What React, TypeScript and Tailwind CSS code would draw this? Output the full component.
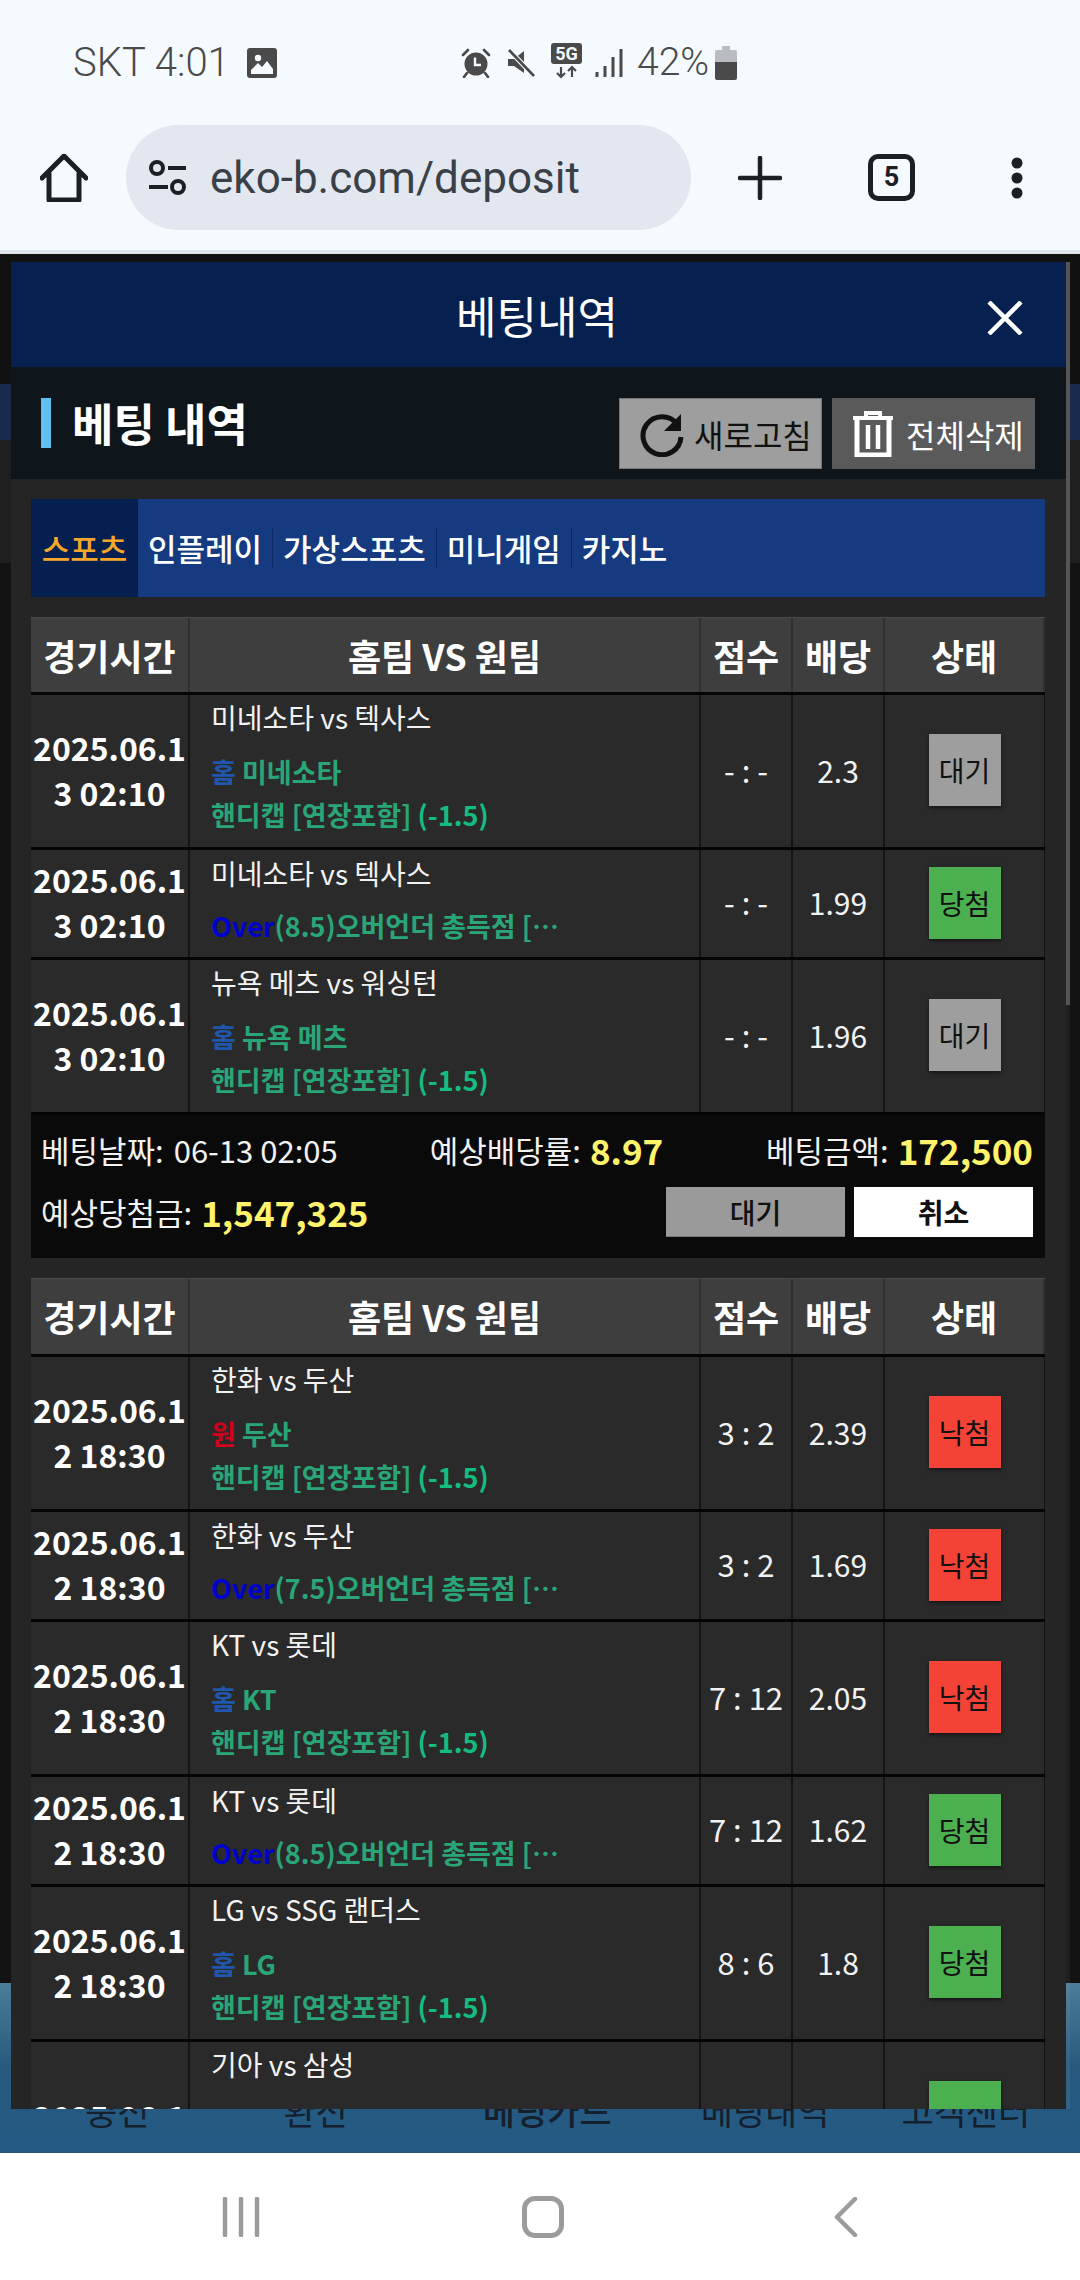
import React from "react";

const KR = "[font-family:'Noto_Sans_CJK_KR','Noto_Sans',sans-serif]";

type Row = {
  date: string;
  match: string;
  kind: "home" | "away" | "over" | "cut";
  pick?: string;
  score?: string;
  odds?: string;
  status?: "대기" | "당첨" | "낙첨";
  box?: string;
};

const statusClass: Record<string, string> = {
  대기: "bg-[#9e9e9e]",
  당첨: "bg-[#4caf50]",
  낙첨: "bg-[#f44336]",
};

function Handicap() {
  return (
    <div className="h-[43px] leading-[43px] text-[27px] text-[#2aa578] font-bold">
      핸디캡 [연장포함] <span className="text-[#13bd80]">(-1.5)</span>
    </div>
  );
}

function Head({ tall }: { tall?: boolean }) {
  const th = "flex items-center justify-center border-r-2 border-[#303030] text-[36px] font-bold text-white pb-px";
  return (
    <div className={`flex bg-[#3e3e3e] border-t border-[#4a4a4a] ${tall ? "h-[76px]" : "h-[75px]"}`}>
      <div className={`${th} w-[159px]`}>경기시간</div>
      <div className={`${th} w-[511px]`}>홈팀 VS 원팀</div>
      <div className={`${th} w-[92px]`}>점수</div>
      <div className={`${th} w-[92px]`}>배당</div>
      <div className={`${th} w-[160px] border-r-0`}>상태</div>
    </div>
  );
}

function Line({ r }: { r: Row }) {
  const cell = "flex items-center justify-center border-r-2 border-[#141414]";
  const tall = r.kind !== "over";
  return (
    <div className={`flex bg-[#2a2a2a] border-r border-[#141414] w-[1014px] ${tall ? "h-[152px]" : "h-[107px]"}`}>
      <div className={`${cell} w-[159px]`}>
        <div className="w-full break-all text-center text-[32px] leading-[45px] font-bold text-white -mt-[3px]">{r.date}</div>
      </div>
      <div className={`w-[511px] border-r-2 border-[#141414] pl-[21px] text-[28px] ${tall ? "pt-0" : "pt-px"}`}>
        <div className={`h-[44px] leading-[44px] text-[#f2f2f2] ${tall ? "mb-[11px]" : "mb-[9px]"}`}>{r.match}</div>
        {r.kind === "over" && (
          <div className="w-[372px] truncate h-[43px] leading-[43px] text-[27px] text-[#2aa578] font-bold">
            <span className="text-[#0000cd]">Over</span>
            {r.pick}오버언더 총득점 [연장포함]
          </div>
        )}
        {(r.kind === "home" || r.kind === "away") && (
          <>
            <div className="h-[43px] leading-[43px] text-[27px] font-bold text-[#2aa578]">
              <span className={r.kind === "home" ? "text-[#1f57ad]" : "text-[#d0021b]"}>
                {r.kind === "home" ? "홈" : "원"}
              </span>{" "}
              {r.pick}
            </div>
            <Handicap />
          </>
        )}
      </div>
      <div className={`${cell} w-[92px] text-[31px] text-[#f2f2f2] whitespace-pre pb-[2px]`}>{r.score}</div>
      <div className={`${cell} w-[92px] text-[30px] text-[#f2f2f2] pb-[2px]`}>{r.odds}</div>
      <div className="flex items-center justify-center w-[159px] pb-[2px]">
        <div
          className={`flex items-center justify-center w-[72px] h-[72px] text-[28px] text-[#111] shadow-[0_2px_4px_rgba(0,0,0,0.5)] ${r.box ?? statusClass[r.status ?? "대기"]}`}
        >
          {r.status}
        </div>
      </div>
    </div>
  );
}

const first: Row[] = [
  { date: "2025.06.13 02:10", match: "미네소타 vs 텍사스", kind: "home", pick: "미네소타", score: "- : -", odds: "2.3", status: "대기" },
  { date: "2025.06.13 02:10", match: "미네소타 vs 텍사스", kind: "over", pick: "(8.5)", score: "- : -", odds: "1.99", status: "당첨" },
  { date: "2025.06.13 02:10", match: "뉴욕 메츠 vs 워싱턴", kind: "home", pick: "뉴욕 메츠", score: "- : -", odds: "1.96", status: "대기" },
];

const second: Row[] = [
  { date: "2025.06.12 18:30", match: "한화 vs 두산", kind: "away", pick: "두산", score: "3 : 2", odds: "2.39", status: "낙첨" },
  { date: "2025.06.12 18:30", match: "한화 vs 두산", kind: "over", pick: "(7.5)", score: "3 : 2", odds: "1.69", status: "낙첨" },
  { date: "2025.06.12 18:30", match: "KT vs 롯데", kind: "home", pick: "KT", score: "7 : 12", odds: "2.05", status: "낙첨" },
  { date: "2025.06.12 18:30", match: "KT vs 롯데", kind: "over", pick: "(8.5)", score: "7 : 12", odds: "1.62", status: "당첨" },
  { date: "2025.06.12 18:30", match: "LG vs SSG 랜더스", kind: "home", pick: "LG", score: "8 : 6", odds: "1.8", status: "당첨" },
  { date: "2025.06.1", match: "기아 vs 삼성", kind: "cut", box: "bg-[#4caf50]" },
];

function Summary() {
  const num = "text-[35px] font-bold text-[#fff36b] ml-[9px]";
  return (
    <div className="bg-[#0a0a0a] h-[143px] pl-[10px] pr-[12px] text-[31px] text-[#f2f2f2]">
      <div className="flex items-center h-[68px] pt-[2px]">
        <span>베팅날짜:</span>
        <span className="ml-[10px]">06-13 02:05</span>
        <span className="ml-[92px]">예상배당률:</span>
        <span className={num}>8.97</span>
        <span className="ml-auto">베팅금액:</span>
        <span className={num}>172,500</span>
      </div>
      <div className="flex items-center h-[50px] mt-[4px]">
        <span>예상당첨금:</span>
        <span className={num}>1,547,325</span>
        <button className="ml-auto w-[179px] h-[50px] bg-[#9a9a9a] border-b border-[#777] text-[28px] font-medium text-[#111]">대기</button>
        <button className="ml-[9px] w-[179px] h-[50px] bg-white text-[28px] font-bold text-[#111]">취소</button>
      </div>
    </div>
  );
}

function StatusIcons() {
  return (
    <>
      <svg className="w-[30px] h-[30px] ml-[184px]" viewBox="0 0 30 30">
        <circle cx="15" cy="16" r="11.5" fill="#4a4a4a" />
        <path d="M14 9.5v7.5h6" stroke="#f5faff" strokeWidth="2.4" fill="none" />
        <path d="M2 7l5-5M28 7l-5-5M6 25l-3 4M24 25l3 4" stroke="#4a4a4a" strokeWidth="2.6" fill="none" strokeLinecap="round" />
      </svg>
      <svg className="w-[30px] h-[30px] ml-[15px]" viewBox="0 0 30 30">
        <path d="M2 11h6l10-8v22l-10-7H2z" fill="#4a4a4a" />
        <path d="M3 2l25 26" stroke="#f5faff" strokeWidth="5" />
        <path d="M3 2l25 26" stroke="#4a4a4a" strokeWidth="2.6" />
      </svg>
      <svg className="w-[31px] h-[36px] ml-[15px] -mt-[3px]" viewBox="0 0 31 36">
        <rect x="0" y="0" width="31" height="21" rx="3" fill="#4a4a4a" />
        <text x="15.5" y="17" textAnchor="middle" fontSize="18" fontWeight="700" fill="#f5faff" fontFamily="Roboto, sans-serif">5G</text>
        <path d="M10 24v10M6 30l4 4 4-4M21 34V24M17 28l4-4 4 4" stroke="#4a4a4a" strokeWidth="2.2" fill="none" />
      </svg>
      <svg className="w-[28px] h-[30px] ml-[13px]" viewBox="0 0 28 30">
        <path d="M2 24v5M10 18v11M18 9v20M26 1v28" stroke="#4a4a4a" strokeWidth="3" fill="none" />
      </svg>
    </>
  );
}

export default function App() {
  return (
    <div className={`relative w-[1080px] h-[2280px] overflow-hidden flex flex-col ${KR}`}>
      {/* browser chrome */}
      <div className="bg-[#f5faff] h-[254px] border-b-4 border-[#dfe4ea]">
        <div className="flex items-center h-[125px] pl-[73px] text-[40px] text-[#4a4a4a] font-['Roboto',sans-serif] font-light">
          <span className="w-[152px] whitespace-nowrap">SKT 4:01</span>
          <svg className="w-[30px] h-[30px] ml-[22px]" viewBox="0 0 30 30">
            <rect width="30" height="30" rx="3" fill="#4a4a4a" />
            <circle cx="11" cy="10" r="3.2" fill="#f5faff" />
            <path d="M4 26v-4l7-7 4 4 5-6 6 8v5z" fill="#f5faff" />
          </svg>
          <StatusIcons />
          <span className="ml-[14px] w-[73px] text-[39px] whitespace-nowrap">42%</span>
          <svg className="w-[22px] h-[34px] ml-[5px]" viewBox="0 0 22 34">
            <path d="M7 0h8v4h5a2 2 0 012 2v10H0V6a2 2 0 012-2h5z" fill="#b9bcc0" />
            <path d="M0 16h22v16a2 2 0 01-2 2H2a2 2 0 01-2-2z" fill="#4a4a4a" />
          </svg>
        </div>
        <div className="flex items-center h-[105px]">
          <svg className="w-[48px] h-[48px] ml-[40px]" viewBox="0 0 48 48">
            <path d="M2 24L24 2l22 22M9 19v27h30V19" fill="none" stroke="#1c2024" strokeWidth="5" strokeLinejoin="round" strokeLinecap="round" />
          </svg>
          <div className="flex items-center ml-[38px] w-[565px] h-[105px] rounded-full bg-[#e2e7f0] pl-[22px]">
            <svg className="w-[40px] h-[38px]" viewBox="0 0 40 38">
              <circle cx="9" cy="9" r="6" fill="none" stroke="#1c2024" strokeWidth="4" />
              <path d="M20 9h18M1 28h19" stroke="#1c2024" strokeWidth="4" />
              <circle cx="30" cy="28" r="6" fill="none" stroke="#1c2024" strokeWidth="4" />
            </svg>
            <span className="ml-[22px] text-[44px] text-[#3a4048] font-['Roboto',sans-serif]">eko-b.com/deposit</span>
          </div>
          <svg className="w-[44px] h-[44px] ml-[47px]" viewBox="0 0 44 44">
            <path d="M22 2v40M2 22h40" stroke="#1c2024" strokeWidth="4.5" strokeLinecap="round" />
          </svg>
          <div className="flex items-center justify-center w-[47px] h-[47px] ml-[86px] rounded-[10px] border-[5px] border-[#1c2024] text-[27px] font-bold text-[#1c2024] font-['Roboto',sans-serif]">
            5
          </div>
          <svg className="w-[12px] h-[42px] ml-[96px]" viewBox="0 0 12 42">
            <circle cx="6" cy="6" r="5.5" fill="#1c2024" />
            <circle cx="6" cy="21" r="5.5" fill="#1c2024" />
            <circle cx="6" cy="36" r="5.5" fill="#1c2024" />
          </svg>
        </div>
      </div>

      {/* page behind the dialog */}
      <div className="h-[130px] bg-[#111111]" />
      <div className="h-[56px] bg-[#1a2a4f]" />
      <div className="h-[123px] bg-[#1f1f1f]" />
      <div className="h-[1420px] bg-[#131313]" />
      <div className="h-[170px] bg-gradient-to-b from-[#4b7d98] via-[#27597d] to-[#245a85] flex items-end pb-[19px] text-[35px] leading-[48px] text-[#14202c]">
        <span className="ml-[85px]">충전</span>
        <span className="ml-[134px]">환전</span>
        <span className="ml-[135px] font-medium">베팅카드</span>
        <span className="ml-[89px]">베팅내역</span>
        <span className="ml-[72px]">고객센터</span>
      </div>

      {/* gesture bar */}
      <div className="flex-1 bg-white flex items-center">
        <svg className="w-[38px] h-[40px] ml-[222px]" viewBox="0 0 38 40">
          <path d="M3 2v36M19 2v36M35 2v36" stroke="#9b9b9b" strokeWidth="4.5" strokeLinecap="round" />
        </svg>
        <div className="w-[42px] h-[42px] ml-[262px] rounded-[13px] border-[5px] border-[#9b9b9b]" />
        <svg className="w-[24px] h-[40px] ml-[270px]" viewBox="0 0 24 40">
          <path d="M21 2L3 20l18 18" fill="none" stroke="#9b9b9b" strokeWidth="4.5" strokeLinecap="round" strokeLinejoin="round" />
        </svg>
      </div>

      {/* dialog */}
      <div className="absolute left-[11px] top-[262px] w-[1059px] h-[1847px] flex overflow-hidden">
        <div className="w-[1055px] h-full bg-[#252525] overflow-hidden">
          <div className="relative flex items-center justify-center h-[105px] bg-[#06214f] text-[44px] text-white pr-[3px]">
            베팅내역
            <svg className="absolute left-[976px] top-[39px] w-[36px] h-[34px]" viewBox="0 0 36 34">
              <path d="M2 1l32 32M34 1L2 33" stroke="#fff" strokeWidth="4.5" />
            </svg>
          </div>
          <div className="flex items-start h-[112px] bg-[#0e151b] pt-[31px] pl-[30px]">
            <div className="w-[10px] h-[50px] bg-[#5fc0ef]" />
            <div className="ml-[21px] w-[176px] whitespace-nowrap text-[45px] leading-[50px] font-bold text-white">베팅 내역</div>
            <button className="flex items-center ml-[371px] w-[203px] h-[71px] bg-[#9e9e9e] border border-[#777] pl-[19px] text-[32px] text-[#111]">
              <svg className="w-[46px] h-[46px] shrink-0" viewBox="0 0 46 46">
                <path d="M38 13A19 19 0 1 0 42 26" fill="none" stroke="#111" strokeWidth="5" />
                <path d="M42 3v17H25z" fill="#111" />
              </svg>
              <span className="ml-[9px] whitespace-nowrap">새로고침</span>
            </button>
            <button className="flex items-center ml-[10px] w-[203px] h-[71px] bg-[#5a5a5a] pl-[20px] text-[32px] text-white">
              <svg className="w-[42px] h-[46px] shrink-0" viewBox="0 0 42 46">
                <path d="M1 7h40M14 7V2h14v5" fill="none" stroke="#fff" strokeWidth="4" />
                <path d="M5 8v36h32V8" fill="none" stroke="#fff" strokeWidth="5" />
                <path d="M16 14v24M26 14v24" stroke="#fff" strokeWidth="4.5" />
              </svg>
              <span className="ml-[12px] whitespace-nowrap">전체삭제</span>
            </button>
          </div>

          <div className="px-[20px] pt-[20px]">
            <div className="flex items-center h-[98px] w-[1014px] bg-[#163a7f] text-[31px] font-medium text-white">
              <div className="flex items-center justify-center w-[107px] h-full bg-[#041f50] text-[#f4a62a]">스포츠</div>
              <div className="ml-[10px] pr-[10px] border-r border-[#0d2a66] leading-[40px]">인플레이</div>
              <div className="ml-[10px] pr-[10px] border-r border-[#0d2a66] leading-[40px]">가상스포츠</div>
              <div className="ml-[10px] pr-[10px] border-r border-[#0d2a66] leading-[40px]">미니게임</div>
              <div className="ml-[10px]">카지노</div>
            </div>

            <div className="mt-[20px] flex flex-col gap-[3px] bg-[#050505] w-[1014px]">
              <Head />
              {first.map((r, i) => (
                <Line key={i} r={r} />
              ))}
              <Summary />
            </div>

            <div className="mt-[20px] flex flex-col gap-[3px] bg-[#050505] w-[1014px]">
              <Head tall />
              {second.map((r, i) => (
                <Line key={i} r={r} />
              ))}
            </div>
          </div>
        </div>
        <div className="relative w-[4px] h-full bg-[rgba(255,255,255,0.05)]">
          <div className="w-[4px] h-[743px] bg-[#555555]" />
        </div>
      </div>
    </div>
  );
}
